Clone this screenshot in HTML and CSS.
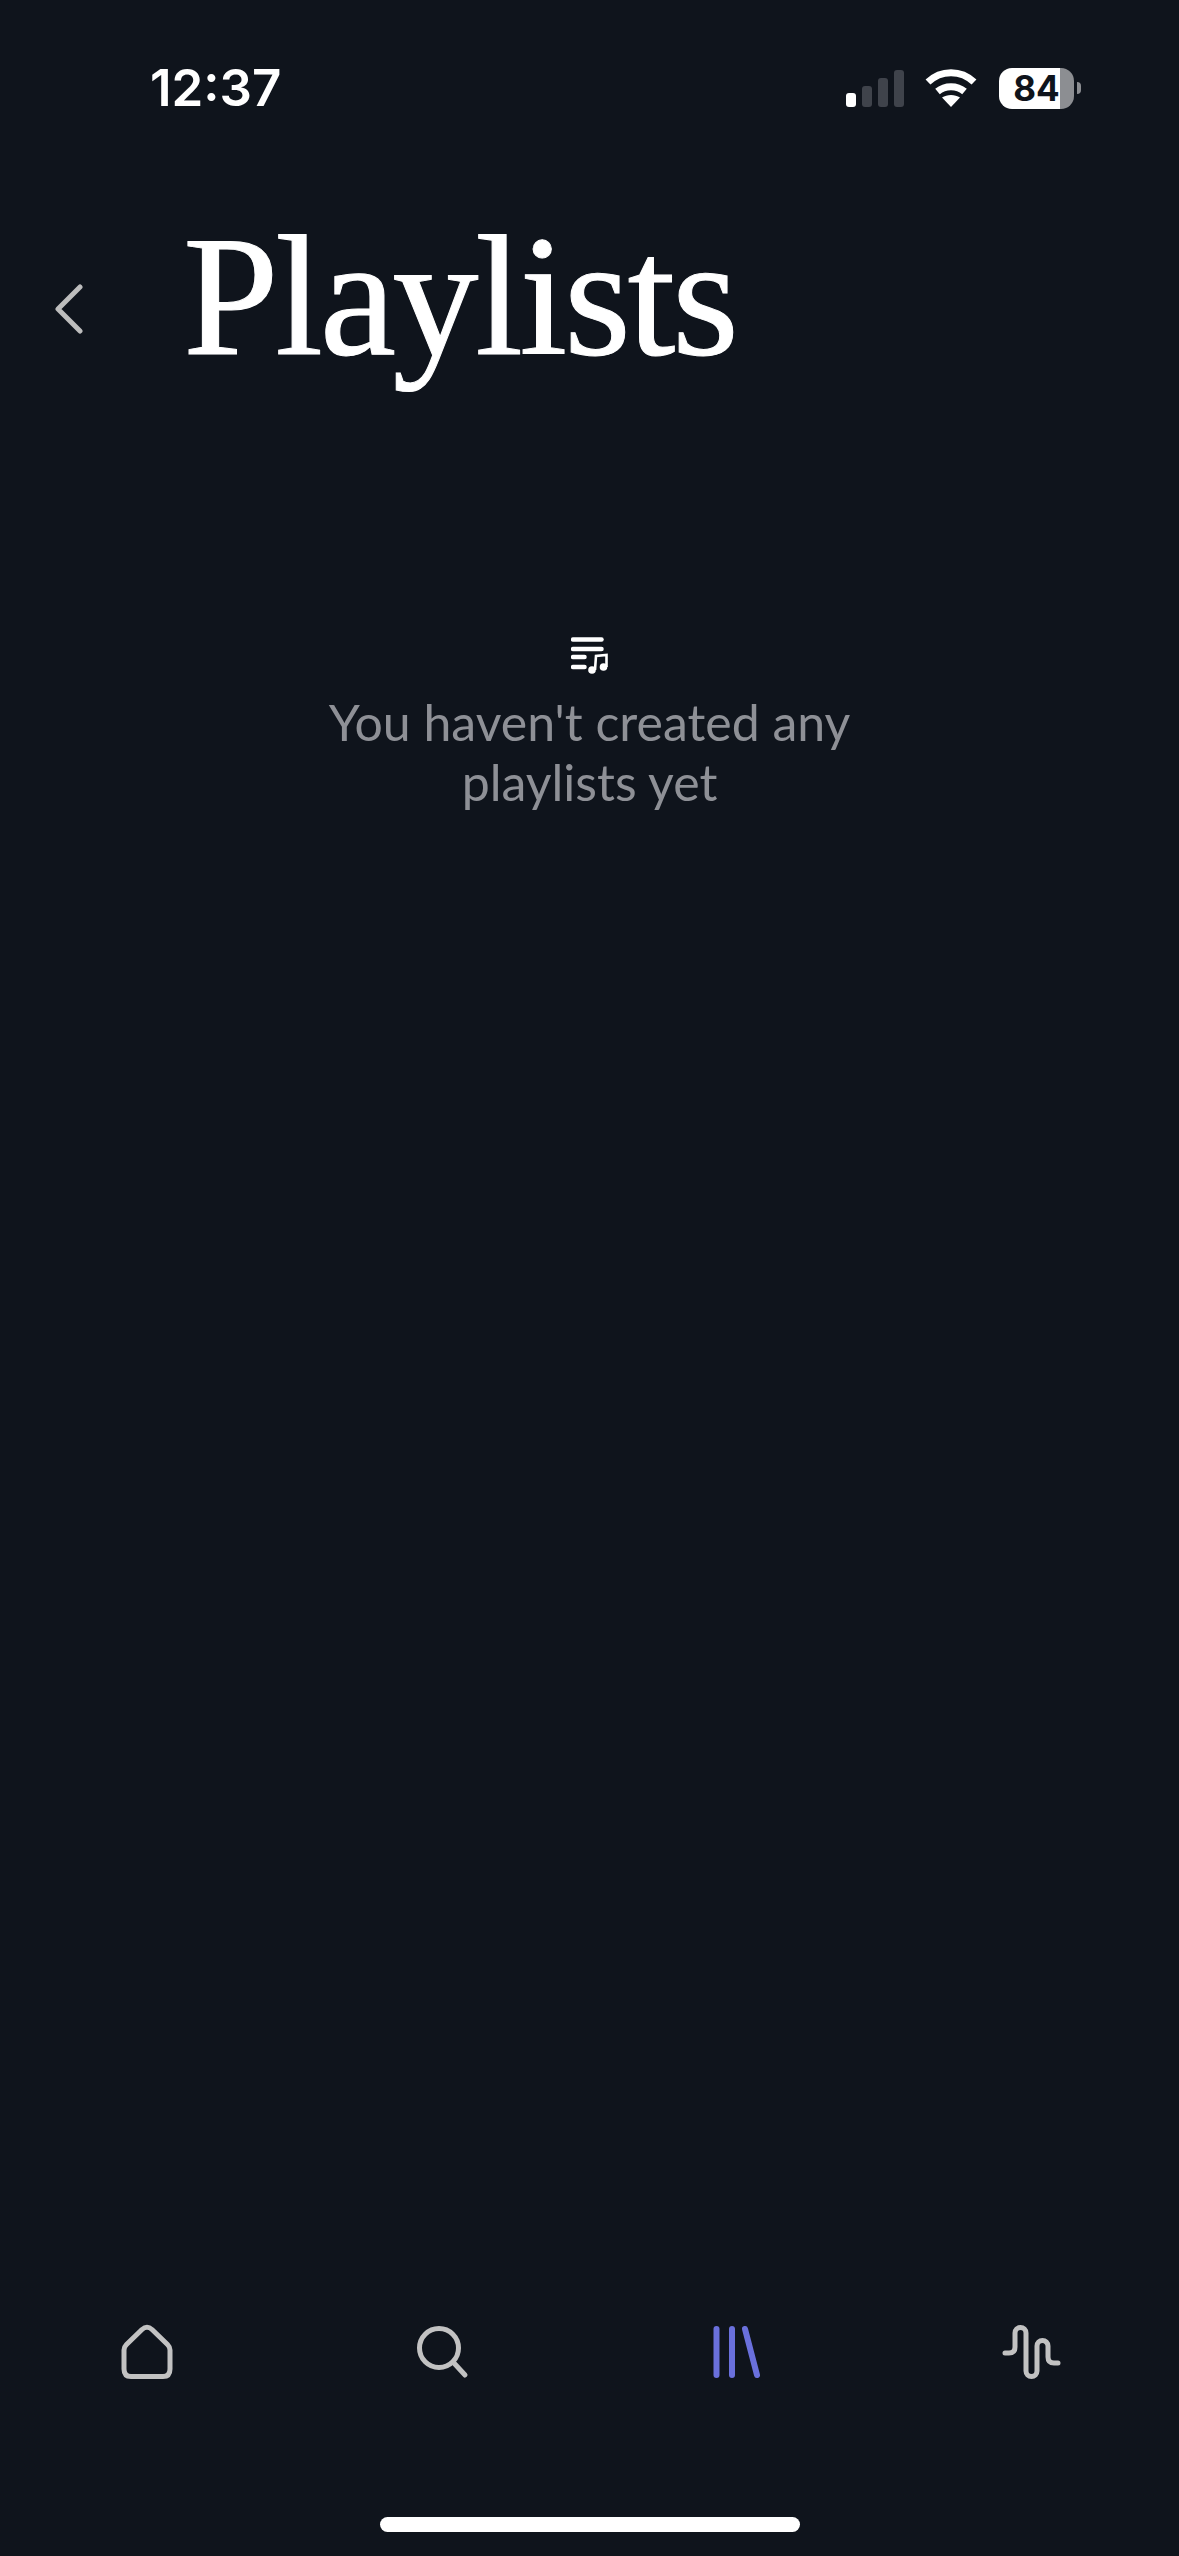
FILE: index.html
```html
<!DOCTYPE html>
<html lang="en">
<head>
  <meta charset="UTF-8" />
  <meta name="viewport" content="width=device-width, initial-scale=1.0"/>
  <title>Playlists</title>
  <link rel="stylesheet" href="styles.css">
</head>
<body>
  <div class="status-bar">
    <span class="time">12:37</span>
    <div class="status-icons">
      <div class="signal">
        <span class="bar bar-on bar-1"></span>
        <span class="bar bar-2"></span>
        <span class="bar bar-3"></span>
        <span class="bar bar-4"></span>
      </div>
      <svg class="wifi" width="52" height="38" viewBox="0 0 52 38">
        <path d="M3 13 C16 0.5 36 0.5 49 13" fill="none" stroke="#fff" stroke-width="7"/>
        <path d="M12.5 22.5 C20 16 32 16 39.5 22.5" fill="none" stroke="#fff" stroke-width="7"/>
        <path d="M17 28.5 C22 25 30 25 35 28.5 L26 38 Z" fill="#fff"/>
      </svg>
      <div class="battery"><span>84</span></div>
      <span class="battery-nub"></span>
    </div>
  </div>

  <header class="page-header">
    <svg class="back" width="28" height="50" viewBox="0 0 28 50">
      <path d="M25 3 L3 25 L25 47" fill="none" stroke="#bdbdbd" stroke-width="5" stroke-linecap="round" stroke-linejoin="round"/>
    </svg>
    <h1 class="page-title">Playlists</h1>
  </header>

  <main class="empty-state">
    <svg class="empty-icon" width="38" height="37" viewBox="0 0 38 37">
      <g stroke="#fff" stroke-width="4.5" stroke-linecap="round">
        <path d="M2 2.5 H30.5"/>
        <path d="M2 12 H30.5"/>
        <path d="M2 20 H13.5"/>
        <path d="M2 30 H13.5"/>
      </g>
      <path d="M24 33 L25 19 L35.5 18 V30" fill="none" stroke="#fff" stroke-width="2.6"/>
      <circle cx="21" cy="33" r="3.8" fill="#fff"/>
      <circle cx="32.5" cy="30" r="3.8" fill="#fff"/>
    </svg>
    <p class="empty-text">You haven't created any<br>playlists yet</p>
  </main>

  <nav class="tab-bar">
    <svg class="tab-icon" width="60" height="60" viewBox="0 0 60 60">
      <path d="M7 28 Q7 25 9.5 22.5 L25 7.5 Q30 3 35 7.5 L50.5 22.5 Q53 25 53 28 V47 Q53 54.5 46 54.5 H14 Q7 54.5 7 47 Z"/>
    </svg>
    <svg class="tab-icon" width="60" height="60" viewBox="0 0 60 60">
      <circle cx="27" cy="26" r="19.5"/>
      <path d="M41 40 L53 53"/>
    </svg>
    <svg class="tab-icon tab-active" width="60" height="60" viewBox="0 0 60 60">
      <path d="M9.5 7 V53"/>
      <path d="M25 7 V53"/>
      <path d="M38 7 L50 53"/>
    </svg>
    <svg class="tab-icon" width="60" height="60" viewBox="0 0 60 60">
      <path d="M3 31 H7 Q13 31 13 25 V11 A5.5 5.5 0 0 1 24 11 V49 A5.5 5.5 0 0 0 35 49 V24 A5.5 5.5 0 0 1 46 24 V35 Q46 41 52 41 H56"/>
    </svg>
  </nav>

  <div class="home-indicator"></div>
</body>
</html>
```

FILE: styles.css
```css
body, html {
  margin: 0;
  padding: 0;
  height: 100%;
  width: 100%;
  overflow: hidden;
}

body {
  display: flex;
  flex-direction: column;
  background-color: #0f141c;
  color: white;
  font-family: "Inter", sans-serif;
}

/* Status bar */
.status-bar {
  display: flex;
  justify-content: space-between;
  align-items: center;
  height: 60px;
  margin-top: 58px;
  padding: 0 98px 0 150px;
}

.time {
  font-size: 51px;
  font-weight: 600;
  line-height: 60px;
}

.status-icons {
  display: flex;
  align-items: center;
}

.signal {
  display: flex;
  align-items: flex-end;
  gap: 6px;
  height: 37px;
  margin-right: 21px;
}

.bar {
  width: 10px;
  border-radius: 3px;
  background-color: #3f434b;
}

.bar-on { background-color: #fff; }
.bar-1 { height: 14px; }
.bar-2 { height: 21px; }
.bar-3 { height: 29px; }
.bar-4 { height: 37px; }

.wifi {
  margin-right: 22px;
}

.battery {
  display: flex;
  justify-content: center;
  align-items: center;
  width: 75px;
  height: 41px;
  border-radius: 13px;
  background: linear-gradient(90deg, #fff 0, #fff 81%, #8c8e92 81%, #8c8e92 100%);
  color: #0f141c;
  font-size: 35px;
  font-weight: 700;
  line-height: 41px;
}

.battery-nub {
  width: 4px;
  height: 12px;
  margin-left: 3px;
  border-radius: 0 6px 6px 0;
  background-color: #8c8e92;
}

/* Header */
.page-header {
  display: flex;
  align-items: center;
  gap: 100px;
  margin-top: 83px;
  padding-left: 55px;
}

.back {
  margin-top: 26px;
}

.page-title {
  margin: 0;
  font-family: "Liberation Serif", serif;
  font-size: 172px;
  font-weight: 400;
  letter-spacing: -3.4px;
  line-height: 190px;
  -webkit-text-stroke: 1px white;
}

/* Empty state */
.empty-state {
  display: flex;
  flex: 1;
  flex-direction: column;
  align-items: center;
  padding-top: 246px;
}

.empty-text {
  margin: 18px 0 0;
  color: #8e9096;
  font-family: "Lato", sans-serif;
  font-size: 50px;
  font-weight: 400;
  line-height: 60px;
  text-align: center;
}

/* Bottom tabs */
.tab-bar {
  display: grid;
  grid-template-columns: repeat(4, 1fr);
  justify-items: center;
}

.tab-icon {
  fill: none;
  stroke: #c2c2c2;
  stroke-width: 5;
  stroke-linecap: round;
  stroke-linejoin: round;
}

.tab-active {
  stroke: #6a70dc;
  stroke-width: 6;
}

.home-indicator {
  align-self: center;
  width: 420px;
  height: 15px;
  margin: 135px 0 24px;
  border-radius: 8px;
  background-color: #fff;
}
```
